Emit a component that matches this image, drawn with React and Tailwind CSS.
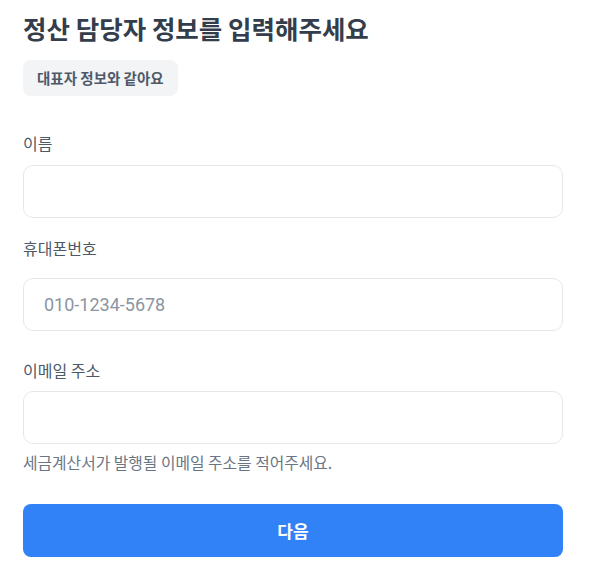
import React from 'react';

const fontStack = { fontFamily: '"Noto Sans CJK KR", "Noto Sans", sans-serif' };

const Field = ({ label, placeholder, labelClass, inputClass }) => (
  <>
    <label className={`block text-[16px] leading-[22px] text-[#4e5968] ${labelClass}`}>{label}</label>
    <input
      type="text"
      placeholder={placeholder}
      className={`block w-full h-[53px] px-5 rounded-[10px] border border-[#e5e8eb] bg-white text-[18px] text-[#333d4b] placeholder:text-[#8b95a1] outline-none ${inputClass}`}
      style={{ fontFamily: 'Roboto, "Noto Sans CJK KR", sans-serif' }}
    />
  </>
);

export default function App() {
  return (
    <div className="w-[604px] h-[577px] bg-white" style={fontStack}>
      <div className="w-[540px] ml-[23px] pt-3">
        {/* 제목 */}
        <h1 className="text-[25.5px] leading-8 font-bold text-[#333d4b]">정산 담당자 정보를 입력해주세요</h1>

        <button className="mt-4 h-9 px-[14px] rounded-lg bg-[#f2f4f6] text-[14.5px] font-semibold text-[#4e5968]">
          대표자 정보와 같아요
        </button>

        <Field label="이름" labelClass="mt-9" inputClass="mt-[11px]" />
        <Field label="휴대폰번호" placeholder="010-1234-5678" labelClass="mt-[19px]" inputClass="mt-[19px]" />
        <Field label="이메일 주소" labelClass="mt-7" inputClass="mt-[10px]" />

        <p className="mt-[9px] text-[15.8px] leading-5 text-[#6b7684]">세금계산서가 발행될 이메일 주소를 적어주세요.</p>

        {/* 다음 버튼 */}
        <button className="mt-[31px] w-full h-[53px] rounded-lg bg-[#3182f6] text-white text-[17px] font-bold">
          다음
        </button>
      </div>
    </div>
  );
}
